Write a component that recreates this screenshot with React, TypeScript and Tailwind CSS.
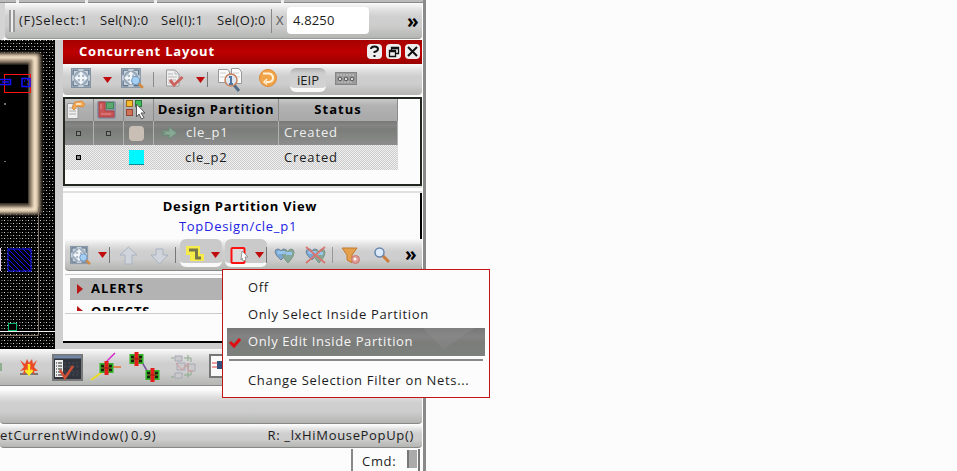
import type { ReactNode } from "react";

type BoxProps = { x: number; y: number; w: number; h: number; className?: string; children: ReactNode };

function Icon({ x, y, w, h, className = "", children }: BoxProps) {
  return (
    <svg width={w} height={h} viewBox={`${x} ${y} ${w} ${h}`} className={`block shrink-0 ${className}`}>
      {children}
    </svg>
  );
}

const bar = "bg-[linear-gradient(#fafafa,#dedede_22%,#cfcfcf_40%,#cdcdcd_65%,#b4b6b2)]";

function Caret({ className = "" }: { className?: string }) {
  return (
    <svg width="9" height="6" viewBox="0 0 9 6" className={`block shrink-0 ${className}`}>
      <path d="M0 0H9L4.5 6Z" fill="#c00c0c" />
    </svg>
  );
}

function Chevrons({ className = "" }: { className?: string }) {
  return <span className={`text-[19px] font-bold leading-[20px] text-black ${className}`}>»</span>;
}

function FitBase() {
  return (
    <g>
      <rect x="0.5" y="0.5" width="18" height="18" fill="#c9d3db" stroke="#8493a3" />
      <path d="M2 7V2H7M12 2H17V7M17 12V17H12M7 17H2V12" fill="none" stroke="#60758c" strokeWidth="1.3" />
      <circle cx="9.5" cy="9.5" r="6.4" fill="#a8b8c8" stroke="#8a9bad" />
      <path d="M9.5 3L12.5 6.500H10.500V8.500H12.500V6.500L16 9.500L12.500 12.500V10.500H10.500V12.500H12.500L9.500 16L6.500 12.500H8.500V10.500H6.500V12.500L3 9.500L6.500 6.500V8.500H8.500V6.500H6.500Z" fill="#f2f5f7" />
    </g>
  );
}

function Lens({ cx, cy }: { cx: number; cy: number }) {
  return (
    <g>
      <path d={`M${cx + 3} ${cy + 3}L${cx + 7} ${cy + 7}`} stroke="#d58a42" strokeWidth="2.500" />
      <circle cx={cx} cy={cy} r="3.800" fill="#a5d0f5" stroke="#7096bd" />
    </g>
  );
}

function DesignCanvas() {
  return (
    <svg width="55" height="309" viewBox="0 40 55 309" className="block shrink-0">
      <defs>
        <pattern id="dots" width="6" height="6" patternUnits="userSpaceOnUse">
          <rect width="6" height="6" fill="#000" />
          <rect x="1" y="1" width="1" height="1" fill="#d4d4d4" />
          <rect x="4" y="4" width="1" height="1" fill="#d4d4d4" />
          <rect x="4" y="1" width="2" height="1" fill="#4d4d46" />
          <rect x="1" y="4" width="2" height="1" fill="#4d4d46" />
        </pattern>
        <pattern id="hatch" x="8" y="249" width="5" height="5" patternUnits="userSpaceOnUse">
          <rect width="5" height="5" fill="#000" />
          <path d="M0 0h1v1h-1zM1 1h1v1h-1zM2 2h1v1h-1zM3 3h1v1h-1zM4 4h1v1h-1z" fill="#1414ff" />
        </pattern>
        <filter id="glow" x="-20%" y="-20%" width="140%" height="140%"><feGaussianBlur stdDeviation="1.3" /></filter>
      </defs>
      <rect y="40" width="55" height="309" fill="url(#dots)" />
      <g filter="url(#glow)">
        <rect x="-8" y="52" width="50" height="163" rx="4" fill="#4c4238" />
        <rect x="-8" y="54" width="47" height="159" rx="3" fill="#b7a48c" />
        <rect x="-8" y="56" width="45" height="155" rx="2" fill="#f0dec3" />
        <rect x="-8" y="59" width="41" height="149" rx="2" fill="#a18f7c" />
        <rect x="-8" y="62" width="38" height="144" rx="2" fill="#463d36" />
        <rect x="-8" y="64" width="36" height="139" fill="#000" />
      </g>
      <rect y="65" width="28" height="138" fill="#000" />
      <rect x="4.500" y="74.500" width="26" height="18" fill="none" stroke="#f11" />
      <path d="M0 79.500H10.500V84.500H0M2 82H9M22 78.500H30V86.500H22ZM24 81H25M27 84H28M27 80H28" stroke="#11f" strokeWidth="1.5" fill="none" />
      <path d="M5 103V105M5 161V162" stroke="#ddd" />
      <path d="M38.500 207V335.500H0" fill="none" stroke="#817466" />
      <path d="M0 331.500H55" stroke="#eee" />
      <path d="M0.500 248V271" stroke="#e6cef0" />
      <rect x="8" y="249" width="23" height="22" fill="url(#hatch)" stroke="#11f" />
      <rect x="8.500" y="323.500" width="8" height="7" fill="#000" stroke="#00b868" />
    </svg>
  );
}

function PanelTools() {
  return (
    <div className={`flex h-[31px] items-start rounded-b-sm pl-[8px] ${bar}`}>
      <svg width="20" height="20" viewBox="0 0 19 19" className="mt-[4px] block"><FitBase /></svg>
      <Caret className="ml-[12px] mt-[13px]" />
      <svg width="23" height="22" viewBox="0 0 22 21" className="ml-[9px] mt-[4px] block"><FitBase /><Lens cx={14} cy={12} /></svg>
      <div className="ml-[9px] mt-[8px] h-[15px] w-px bg-[#8b8b8b]" />
      <Icon x={165} y={69} w={20} h={20} className="ml-[11px] mt-[5px]">
        <path d="M166.500 70H175L179 74V86H166.500Z" fill="#f0f0f0" stroke="#999" />
        <path d="M168 74H173M168 77H177M168 80H176M168 83H174M175 70V74H179" stroke="#b7b7b7" fill="none" />
        <path d="M170 80L174 85L182.500 77" fill="none" stroke="#cb655f" strokeWidth="3" />
      </Icon>
      <Caret className="ml-[11px] mt-[13px]" />
      <div className="ml-[2px] mt-[8px] h-[15px] w-px bg-[#777]" />
      <Icon x={217} y={67} w={26} h={25} className="ml-[9px] mt-[3px]">
        <path d="M218.500 69.500H227.500L229.500 72V82.500H218.500ZM231.500 68.500H239L241.500 72V83.500H231.500Z" fill="#fafafa" stroke="#999" />
        <path d="M220 73H226M220 77H225M233 73H239M234 77H240" stroke="#ccc" />
        <path d="M234 85L239 91" stroke="#536b87" strokeWidth="3" />
        <circle cx="231" cy="80" r="6" fill="#dde8f4" stroke="#c78058" strokeWidth="1.500" />
        <path d="M231 76V84M229 84H233M229 77H231" stroke="#5474a0" strokeWidth="2" />
      </Icon>
      <Icon x={259} y={69} w={20} h={20} className="ml-[15px] mt-[4px]">
        <circle cx="269" cy="79" r="8.5" fill="#f1a448" stroke="#df8b3b" />
        <path d="M264 74.500H270C276 76 275 83 269 83H267" fill="none" stroke="#fff2d9" strokeWidth="2" />
        <path d="M268 80L265 83L268 85.500" fill="none" stroke="#fff2d9" strokeWidth="1.500" />
      </Icon>
      <div className="ml-[12px] mt-[4px] flex h-[24px] w-[36px] items-center justify-center rounded-md border-b-4 border-[#f9f9f9] bg-linear-to-b from-[#aeaeae] via-[#cecece] via-25% to-[#d2d2d2] pt-[5px] text-[13px]">iEIP</div>
      <Icon x={336} y={71} w={22} h={15} className="ml-[9px] mt-[7px]">
        <rect x="336.500" y="72.500" width="21" height="12" fill="#9c9c9c" stroke="#858585" />
        <path d="M338 75H356M339 82H354" stroke="#ccc" strokeDasharray="2 1" />
        <circle cx="341" cy="79" r="1.800" fill="#ddd" stroke="#555" /><circle cx="347" cy="79" r="1.800" fill="#ddd" stroke="#555" /><circle cx="353" cy="79" r="1.800" fill="#ddd" stroke="#555" />
      </Icon>
    </div>
  );
}

const headCell = "flex h-[22px] items-center border-r border-[#8b8b8b] bg-linear-to-b from-[#c9c9c9] via-[#b2b2b2] via-30% to-[#a9a9a9]";
const selectedCell = "flex h-[24px] items-center border-r border-[#b0b0b0] bg-[linear-gradient(#777976,#858585_18%,#7b7d7a_35%,#838583_70%,#8c8c8c)] text-[#eee]";
const plainCell = "flex h-[25px] items-center border-r border-[#ddd] bg-[conic-gradient(#cacaca_25%,#f1f1f1_0_50%,#cacaca_0_75%,#f1f1f1_0)] bg-[length:2px_2px]";

function Marker({ faint = false }: { faint?: boolean }) {
  return <div className={`mx-auto size-[5px] border ${faint ? "border-[#333] bg-[#888]" : "border-black bg-[#888]"}`} />;
}

function PartitionTable() {
  return (
    <div className="h-[89px] border-2 border-[#222720] bg-[#fcfcfc]">
      <div className="grid w-[333px] grid-cols-[29px_30px_30px_125px_119px]">
        <div className={headCell}>
          <Icon x={66} y={99} w={22} h={20}>
            <path d="M68.500 102.500H75L79 106V117.500H68.500Z" fill="#eee" stroke="#999" />
            <path d="M70 107H75M70 110H77M70 113H77M74 103V107H78" stroke="#aaa" fill="none" />
            <path d="M73 107L76 101L83 100L86 103L84 106L78 105L75 109Z" fill="#f3a85a" stroke="#d88d3d" />
            <path d="M77 103H82" stroke="#fbe0b5" strokeWidth="2" />
          </Icon>
        </div>
        <div className={headCell}>
          <Icon x={96} y={100} w={21} h={20} className="ml-[2px]">
            <rect x="97" y="101" width="19" height="18" rx="2" fill="#8893a3" />
            <path d="M99 102H105V111H114V117H99Z" fill="#c85455" stroke="#ad3f44" />
            <path d="M101 104V109M101 114H111" stroke="#e39292" />
            <rect x="106.500" y="102.500" width="7" height="6" fill="#5ba870" stroke="#3f8b55" />
          </Icon>
        </div>
        <div className={headCell}>
          <Icon x={125} y={100} w={24} h={20} className="ml-[1px]">
            <rect x="126.500" y="100.500" width="6" height="6" fill="#f5bc2b" stroke="#9d691c" />
            <rect x="135.500" y="100.500" width="6" height="6" fill="#3ebf58" stroke="#29793d" />
            <rect x="126.500" y="109.500" width="6" height="6" fill="#cf7058" stroke="#944737" />
            <path d="M136.500 104V117L139 114L141.500 119L144 117.500L141 113H145Z" fill="#fff" stroke="#555" />
          </Icon>
        </div>
        <div className={`${headCell} justify-center text-[13px] font-bold tracking-[0.750px] text-black`}>Design Partition</div>
        <div className={`${headCell} justify-center text-[13px] font-bold tracking-[1px] text-black`}>Status</div>
        <div className={`${selectedCell} pr-[2px]`}><Marker faint /></div>
        <div className={selectedCell}><Marker faint /></div>
        <div className={`${selectedCell} pr-[4px]`}><div className="mx-auto size-[15px] rounded-sm bg-[#c9bfb5]" /></div>
        <div className={selectedCell}>
          <Icon x={159} y={125} w={20} h={14} className="ml-[5px]">
            <path d="M161 130H169V126L177 132L169 138V134H161L165 132Z" fill="#86a894" stroke="#6c8a77" />
          </Icon>
          <span className="ml-[7px] text-[13px] tracking-[0.750px]">cle_p1</span>
        </div>
        <div className={`${selectedCell} pl-[5px] text-[13px] tracking-[0.850px]`}>Created</div>
        <div className={`${plainCell} pr-[2px]`}><Marker /></div>
        <div className={plainCell} />
        <div className={`${plainCell} pr-[4px]`}><div className="mx-auto size-[15px] border-b border-[#068f94] bg-[#00f7ff]" /></div>
        <div className={`${plainCell} pl-[31px] text-[13px] tracking-[0.750px]`}>cle_p2</div>
        <div className={`${plainCell} pl-[5px] text-[13px] tracking-[0.850px]`}>Created</div>
      </div>
    </div>
  );
}

function Hearts({ crossed = false }: { crossed?: boolean }) {
  return (
    <svg width="21" height="19" viewBox="0 0 21 19" className="block shrink-0">
      <path d="M1 6Q1 3 4 3Q6 3 7 5Q8 3 10 3Q13 3 13 6Q13 9 7 14Q1 9 1 6Z" fill="#7ba6cf" stroke="#71849b" />
      <path d="M8 7Q8 4 11 4Q13 4 14 6Q15 3 17 3Q20 3 20 7Q20 11 14 17Q8 11 8 7Z" fill="#87a796" stroke="#7b9589" />
      <path d="M3.500 6.500H11.500M12 7.500H18" fill="none" stroke="#94c6ef" strokeWidth="3" />
      {crossed && <path d="M1 1L20 17M20 1L1 17" stroke="#d87570" strokeWidth="1.800" />}
    </svg>
  );
}

function ViewTools() {
  return (
    <div className={`ml-[2px] flex h-[32px] w-[357px] items-start rounded-b-sm border-b border-[#888] pl-[5px] ${bar}`}>
      <svg width="21" height="22" viewBox="0 0 22 21" className="mt-[6px] block shrink-0"><FitBase /><Lens cx={14} cy={12} /></svg>
      <Caret className="ml-[7px] mt-[13px]" />
      <div className="ml-[2px] mt-[8px] h-[16px] w-px bg-[#777]" />
      <Icon x={117} y={245} w={21} h={20} className="ml-[8px] mt-[7px]">
        <path d="M127.500 246L136 254H131V263H124V254H119Z" fill="#d0d4db" stroke="#aab2c2" />
      </Icon>
      <Icon x={148} y={245} w={21} h={20} className="ml-[10px] mt-[7px]">
        <path d="M155 248H162V254H167L158.500 263L150 254H155Z" fill="#d0d4db" stroke="#aab2c2" />
      </Icon>
      <div className="ml-[5px] mt-[8px] h-[16px] w-px bg-[#777]" />
      <div className="ml-[4px] flex h-[28px] w-[42px] items-start rounded-md border-b-4 border-[#f9f9f9] bg-[#cacaca]">
        <Icon x={185} y={246} w={20} h={20} className="ml-[5px] mt-[6px]">
          <path d="M188 249H198V257H202V260H192V254H188Z" fill="#f6ee3c" stroke="#f5ec4c" strokeWidth="4" />
          <path d="M189 251H196.500V259H201" fill="none" stroke="#77774a" strokeWidth="3" />
        </Icon>
        <Caret className="ml-[6px] mt-[13px]" />
      </div>
      <div className="ml-[3px] flex h-[28px] w-[42px] items-start rounded-md border-b-4 border-[#f9f9f9] bg-[#cacaca]">
        <Icon x={229} y={244} w={22} h={21} className="ml-[4px] mt-[6px]">
          <rect x="231.500" y="247" width="13" height="15" rx="1" fill="#ddd" stroke="#f11" strokeWidth="2" />
          <path d="M242 250L248 256H245L246 259L243 260L242 257L241 259Z" fill="#fff" stroke="#999" />
        </Icon>
        <Caret className="ml-[4px] mt-[13px]" />
      </div>
      <div className="-ml-px mt-[8px] h-[16px] w-px bg-[#777]" />
      <div className="ml-[7px] mt-[7px]"><Hearts /></div>
      <div className="ml-[10px] mt-[7px]"><Hearts crossed /></div>
      <div className="ml-[6px] mt-[8px] h-[16px] w-px bg-[#999]" />
      <Icon x={341} y={245} w={22} h={20} className="ml-[7px] mt-[7px]">
        <path d="M343 247H358L353 254V262L348 259V254Z" fill="#e4a04b" stroke="#c17a36" />
        <circle cx="356.500" cy="258.500" r="4" fill="#df9c96" stroke="#cf7570" />
        <circle cx="356" cy="258" r="1.500" fill="#fff" />
      </Icon>
      <Icon x={373} y={245} w={18} h={19} className="ml-[11px] mt-[7px]">
        <path d="M382 254L389 261" stroke="#cd7b38" strokeWidth="3" />
        <circle cx="379.500" cy="251.500" r="4.500" fill="#dceafa" stroke="#6988af" strokeWidth="1.500" />
      </Icon>
      <Chevrons className="ml-[14px] mt-[5px]" />
    </div>
  );
}

function PartitionView() {
  return (
    <div className="h-[150px] border-r-2 border-b-2 border-black bg-[#fcfcfc]">
      <div className="h-[45px] w-[354px] pt-[3px] text-center text-[13px] leading-[20px]">
        <div className="font-bold tracking-[0.720px] text-black">Design Partition View</div>
        <div className="-ml-[4px] text-[#2222e4] tracking-[0.700px]">TopDesign/cle_p1</div>
      </div>
      <div className="mt-px"><ViewTools /></div>
      <div className="mt-[3px] ml-[2px] h-[40px] overflow-hidden border-t border-b border-[#ccc] pl-[5px] pt-[3px] text-[13px] font-bold text-black">
        <div className="flex h-[22px] items-center bg-[#b3b3b3] pl-[7px]">
          <svg width="6" height="10" viewBox="0 0 6 10"><path d="M0 0L6 5L0 10Z" fill="#b81717" /></svg>
          <span className="ml-[8px] tracking-[1px]">ALERTS</span>
        </div>
        <div className="flex h-[11px] items-start overflow-hidden pl-[7px] pt-[1px]">
          <svg width="6" height="10" viewBox="0 0 6 10" className="mt-[5px] shrink-0"><path d="M0 0L6 5L0 10Z" fill="#b81717" /></svg>
          <span className="ml-[8px] leading-[20px] tracking-[0.800px]">OBJECTS</span>
        </div>
      </div>
    </div>
  );
}

function Chip({ x, y }: { x: number; y: number }) {
  return (
    <g>
      <rect x={x - 6.5} y={y - 5} width="14" height="10" fill="#35b229" />
      <path d={`M${x - 5} ${y - 2}H${x - 2}M${x + 3} ${y - 2}H${x + 6}M${x - 5} ${y + 2}H${x - 2}M${x + 3} ${y + 2}H${x + 6}`} stroke="#14240f" strokeWidth="2.500" />
      <rect x={x - 1.5} y={y - 7} width="4" height="14" fill="#e31c1c" />
      <path d={`M${x - 4} ${y}H${x + 5}`} stroke="#951616" />
    </g>
  );
}

function BottomTools() {
  return (
    <div className={`flex h-[37px] w-[423px] items-center border-b border-[#888] ${bar}`}>
      <div className="h-[8px] w-[2px] bg-[#8fae8e]" />
      <Icon x={19} y={357} w={20} h={21} className="ml-[17px]">
        <path d="M20 374H38" stroke="#777" strokeWidth="2" />
        <path d="M20 360L25 364L27 359L29 363L32 359L33 364L37 360L34 367L38 371H34L35 375L29 370L23 375L24 370L20 371L24 367Z" fill="#eb4a29" />
        <path d="M29 364V374M25.500 370L29 374L32.500 370" fill="none" stroke="#ffed23" strokeWidth="2.500" />
      </Icon>
      <Icon x={52} y={355} w={31} h={28} className="ml-[13px] mt-[2px]">
        <rect x="53" y="356" width="29" height="25" fill="#30353d" stroke="#777" strokeWidth="2" />
        <path d="M54 358H81" stroke="#7389a5" strokeWidth="3" /><rect x="55" y="361" width="8" height="17" fill="#eee" />
        <path d="M56 364H62M56 367H62M56 370H62M56 373H62M56 376H62" stroke="#222" strokeDasharray="1 1 4" />
        <path d="M65 363V378M69 363V378M73 363V378M77 363V378M65 367H79M65 374H79" stroke="#444b58" strokeDasharray="2 2" />
        <path d="M60 371L65 379L73 367" fill="none" stroke="#cf4f35" strokeWidth="2.500" />
      </Icon>
      <Icon x={90} y={352} w={32} h={30} className="ml-[7px]">
        <path d="M105 370L91 380" stroke="#eedc20" strokeWidth="2" /><path d="M107 361L115 353" stroke="#d725cc" strokeWidth="1.500" /><path d="M110 367H121" stroke="#e66e2c" strokeWidth="1.500" />
        <g transform="translate(0 1)"><Chip x={106} y={367} /></g>
      </Icon>
      <Icon x={129} y={352} w={32} h={32} className="ml-[7px]">
        <path d="M140 360L149 375" stroke="#7956a2" strokeWidth="1.500" />
        <Chip x={136} y={360} /><Chip x={152} y={376} />
      </Icon>
      <Icon x={169} y={354} w={28} h={27} className="ml-[9px]">
        <path d="M174 356H181V361H174ZM174 373H181V378H174ZM176 363H184V370H176ZM187 364H194V371H187Z" fill="#cacaca" stroke="#a8a8b8" />
        <path d="M170 358H173M170 377H173M183 358H190V362M187 355V361M183 375H190V371M187 372V378M184 366H188" stroke="#8ba98b" fill="none" />
        <path d="M175 363L181 370L187 363V371H192" fill="none" stroke="#d59a9a" />
      </Icon>
      <Icon x={208} y={354} w={17} h={26} className="ml-[11px]">
        <rect x="209" y="355" width="18" height="22" fill="#fafafa" stroke="#777" strokeWidth="2" />
        <path d="M211 363H218M211 367H218" stroke="#e14545" /><rect x="216" y="361" width="9" height="8" fill="#334f7b" />
      </Icon>
    </div>
  );
}

const menuItem = "flex h-[27px] items-center pl-[21px] text-[13px] tracking-[0.670px] whitespace-nowrap";

function FilterMenu() {
  return (
    <div className="absolute left-[222px] top-[269px] h-[129px] w-[268px] border border-[#c31313] bg-[#fcfcfc] px-[4px] pt-[4px]">
      <div className={menuItem}>Off</div>
      <div className={menuItem}>Only Select Inside Partition</div>
      <div className="relative flex h-[28px] w-[258px] items-center bg-[linear-gradient(#777,#838383_30%,#7b7d7a_55%,#7e807d)] pl-[21px] text-[13px] tracking-[0.600px] text-[#f5f5f5]">
        <svg width="258" height="28" viewBox="0 0 258 28" className="absolute left-0 top-0"><path d="M196 0H248L216 21Z" fill="#8b8b8b" fillOpacity="0.45" /></svg>
        <svg width="12" height="10" viewBox="0 0 12 10" className="absolute left-[2px] top-[10px]"><path d="M1 4L5 8L11 1" fill="none" stroke="#df0e13" strokeWidth="3" /></svg>
        <span className="relative">Only Edit Inside Partition</span>
      </div>
      <div className="mx-[2px] mt-[3px] h-[2px] bg-[#888]" />
      <div className={`mt-[6px] ${menuItem}`}>Change Selection Filter on Nets...</div>
    </div>
  );
}

export default function App() {
  return (
    <div className="relative h-[471px] w-[957px] overflow-hidden bg-[#fcfcfc] font-['Open_Sans','Noto_Sans',sans-serif] text-[13px] text-[#1c1c1c]">
      <div className="h-[471px] w-[426px] border-r-3 border-[#8a8a8a] bg-[#fcfcfc]">
        <div className="flex h-[3px] gap-[3px] bg-[#eee]">
          <div className="w-[16px] border-b border-[#888] bg-[#bbb]" /><div className="w-[66px] border-b border-[#888] bg-[#bbb]" /><div className="w-[66px] border-b border-[#888] bg-[#bbb]" /><div className="w-[124px] border-b border-[#888] bg-[#bbb]" /><div className="flex-1 border-b border-[#888] bg-[#bbb]" />
        </div>
        <div className="flex h-[37px]">
          <div className="w-[5px] rounded-br-lg bg-[#d4d4d4]" />
          <div className={`flex h-[36px] w-[417px] items-center rounded-b-sm border-b border-[#999] pl-[4px] text-[13px] ${bar}`}>
            <div className="h-[22px] w-[6px] border-x-2 border-[#999] bg-[#eee]" />
            <span className="ml-[4px] w-[81px] tracking-[0.700px]">(F)Select:1</span>
            <span className="w-[61px] tracking-[0.300px]">Sel(N):0</span><span className="w-[56px] tracking-[0.300px]">Sel(I):1</span><span className="w-[54px] tracking-[0.300px]">Sel(O):0</span>
            <div className="h-[24px] w-px bg-[#888]" />
            <span className="ml-[4px] w-[11px] text-[#555]">X</span>
            <div className="h-[27px] w-[82px] rounded-sm bg-white pl-[6px] leading-[26px] tracking-[0.150px]">4.8250</div>
            <Chevrons className="ml-[38px]" />
          </div>
        </div>
        <div className="flex h-[309px]">
          <DesignCanvas />
          <div className="w-[8px] shrink-0 bg-[#cecece]" />
          <div className="w-[359px] shrink-0">
            <div className="flex h-[24px] items-center bg-linear-to-b from-[#a60000] via-[#bd0000] to-[#990000] pl-[16px] text-[13px] font-bold text-white">
              <span className="w-[288px] tracking-[0.820px]">Concurrent Layout</span>
              <div className="-mt-[2px] flex gap-[4px]">
                <Icon x={0} y={0} w={15} h={15}><rect width="15" height="15" rx="4" fill="#eee" /><path d="M4 5Q4 2.500 7.500 2.500Q11 2.500 11 5Q11 7 7.500 8V9M7.500 11V13" fill="none" stroke="#111" strokeWidth="2" /></Icon>
                <Icon x={0} y={0} w={15} h={15}><rect width="15" height="15" rx="4" fill="#eee" /><path d="M5.500 6V3.500H12.500V9.500H10M3.500 6.500H9.500V12.500H3.500ZM3 7.500H10M5 4.500H13" fill="none" stroke="#111" strokeWidth="1.300" /></Icon>
                <Icon x={0} y={0} w={15} h={15}><rect width="15" height="15" rx="4" fill="#eee" /><path d="M3 3L12 12M12 3L3 12" stroke="#111" strokeWidth="2" /></Icon>
              </div>
            </div>
            <PanelTools />
            <div className="mt-[2px]"><PartitionTable /></div>
            <div className="h-[7px] border-y-2 border-[#e0e0e0] bg-white" />
            <PartitionView />
            <div className="h-[6px] bg-[#ccc]" />
          </div>
        </div>
        <BottomTools />
        <div className="h-[4px] bg-[#fcfcfc]" />
        <div className={`h-[34px] w-[422px] rounded-b-sm border-b border-[#888] ${bar}`} />
        <div className={`mt-px flex h-[23px] w-[422px] items-center justify-between rounded-b-sm border-b border-[#888] pr-[8px] ${bar}`}>
          <span className="tracking-[0.800px]">etCurrentWindow()<span className="ml-[2px]">0.9)</span></span>
          <span className="tracking-[0.670px]">R: _lxHiMousePopUp()</span>
        </div>
        <div className="flex h-[23px] pl-[351px] pt-[1px]">
          <div className="h-[22px] w-[2px] bg-[#888]" />
          <span className="ml-[9px] w-[45px] leading-[25px] tracking-[0.700px]">Cmd:</span>
          <div className="mt-px h-[18px] w-[10px] border-l-2 border-[#777] bg-[#aaa]" />
          <div className="ml-px h-[22px] w-[2px] bg-[#777]" />
        </div>
      </div>
      <FilterMenu />
    </div>
  );
}
